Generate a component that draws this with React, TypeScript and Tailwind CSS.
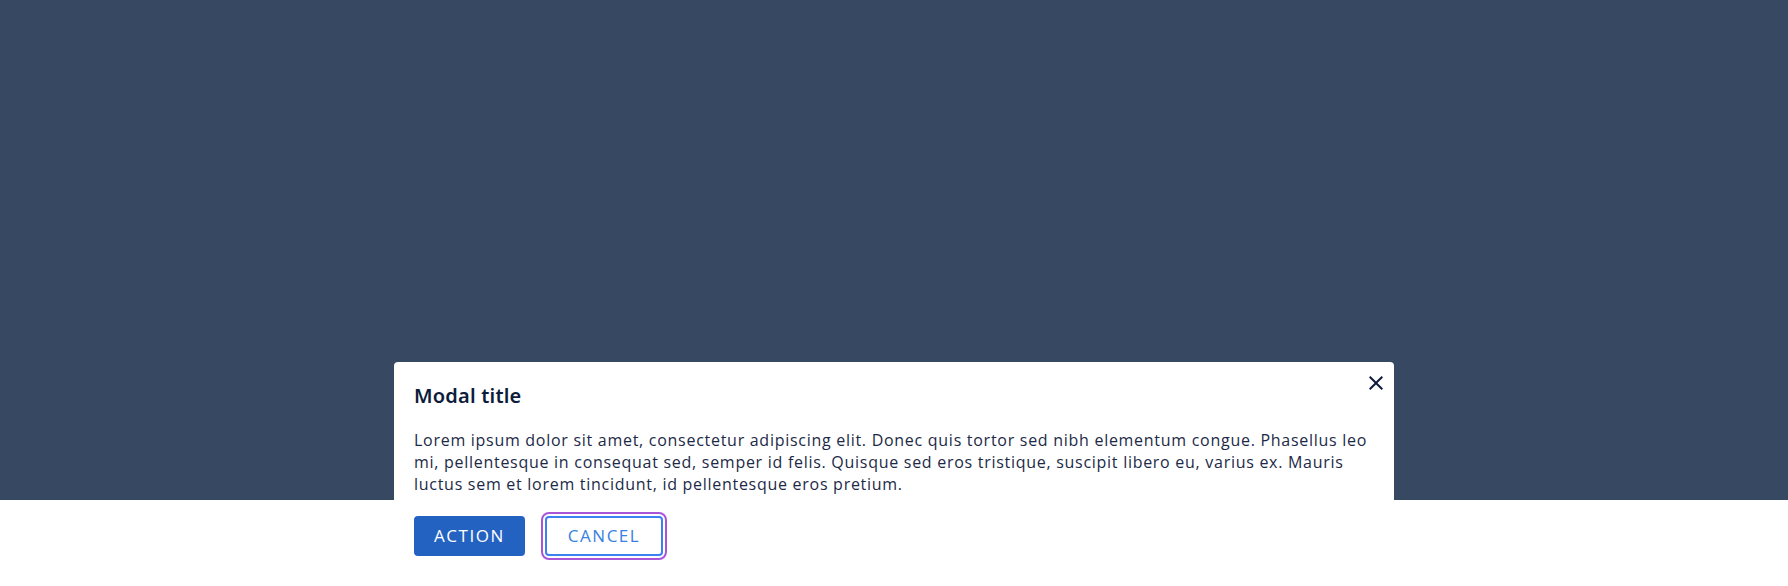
import React from 'react';
import { MdClose } from 'react-icons/md';

const App = () => {
  return (
    <div className="w-full h-[586px] bg-white" style={{ fontFamily: '"Open Sans", "Noto Sans", sans-serif' }}>
      <div className="h-[500px] bg-[#374862] pt-[362px] flex justify-center">
        <div className="relative w-[1000px] h-[213px] shrink-0 bg-white rounded-[4px] px-5 pt-5 pb-5 text-[#0d1c3b]">
          <button className="absolute right-[6px] top-[9px] p-0 text-[#0d1c3b]">
            <MdClose size={24} />
          </button>
          <h2 className="text-[20px] leading-[28px] font-semibold tracking-[0.01em]" style={{ fontFamily: '"Noto Sans", sans-serif' }}>
            Modal title
          </h2>
          <p className="mt-[19px] text-[16px] leading-[22px] tracking-[0.045em] text-[#1c2a47]">
            Lorem ipsum dolor sit amet, consectetur adipiscing elit. Donec quis tortor sed nibh elementum congue. Phasellus leo mi, pellentesque in consequat sed, semper id felis. Quisque sed eros tristique, suscipit libero eu, varius ex. Mauris luctus sem et lorem tincidunt, id pellentesque eros pretium.
          </p>
          <div className="mt-[21px] flex gap-5">
            <button className="h-10 px-5 rounded-[4px] bg-[#2462c2] text-white text-[17px] tracking-[0.09em]">
              ACTION
            </button>
            <button className="h-10 px-[21px] rounded-[4px] border-2 border-[#3b82f0] text-[#3a7fe2] text-[17px] tracking-[0.09em] outline-2 outline-offset-2 outline-[#a855d8]" style={{ outlineStyle: 'solid' }}>
              CANCEL
            </button>
          </div>
        </div>
      </div>
    </div>
  );
};

export default App;
